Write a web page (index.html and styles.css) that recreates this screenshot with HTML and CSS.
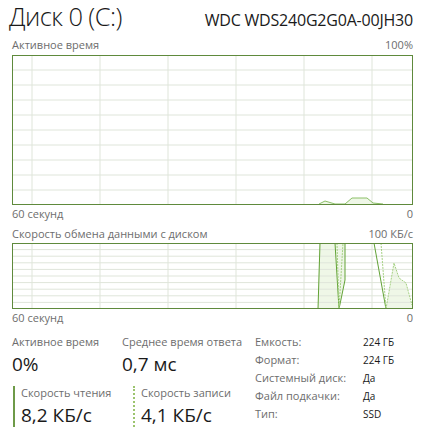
FILE: index.html
```html
<!DOCTYPE html>
<html lang="ru">
<head>
  <meta charset="UTF-8" />
  <title>Диск 0 (C:)</title>
  <link rel="stylesheet" href="styles.css">
</head>
<body>
  <header class="head">
    <h1>Диск 0 (C:)</h1>
    <div class="model">WDC WDS240G2G0A-00JH30</div>
  </header>

  <div class="graph-row top"><span>Активное время</span><span>100%</span></div>
  <svg class="chart big" viewBox="0 0 401 150" width="401" height="150">
    <polygon class="fill" points="307,149 313,146 323,149 333,149 340,143 355,143 361,148 371,149"/>
    <g class="grid">
      <line x1="0" y1="15" x2="401" y2="15"/>
      <line x1="0" y1="30" x2="401" y2="30"/>
      <line x1="0" y1="45" x2="401" y2="45"/>
      <line x1="0" y1="60" x2="401" y2="60"/>
      <line x1="0" y1="75" x2="401" y2="75"/>
      <line x1="0" y1="90" x2="401" y2="90"/>
      <line x1="0" y1="105" x2="401" y2="105"/>
      <line x1="0" y1="120" x2="401" y2="120"/>
      <line x1="0" y1="135" x2="401" y2="135"/>
      <line x1="20" y1="0" x2="20" y2="150"/>
      <line x1="88" y1="0" x2="88" y2="150"/>
      <line x1="156" y1="0" x2="156" y2="150"/>
      <line x1="224" y1="0" x2="224" y2="150"/>
      <line x1="292" y1="0" x2="292" y2="150"/>
      <line x1="360" y1="0" x2="360" y2="150"/>
    </g>
    <polyline class="line" points="307,149 313,146 323,149 333,149 340,143 355,143 361,148 371,149"/>
    <rect class="frame" x="0.5" y="0.5" width="400" height="149"/>
  </svg>
  <div class="graph-row"><span>60 секунд</span><span>0</span></div>

  <div class="graph-row second"><span>Скорость обмена данными с диском</span><span>100 КБ/с</span></div>
  <svg class="chart small" viewBox="0 0 401 66" width="401" height="66">
    <polygon class="fill" points="307,0 333,0 333,37 327,66 306,66"/>
    <polygon class="fill" points="374,66 382,20 387,35 394,40 400,62 400,66"/>
    <g class="grid">
      <line x1="0" y1="6.6" x2="401" y2="6.6"/>
      <line x1="0" y1="13.2" x2="401" y2="13.2"/>
      <line x1="0" y1="19.8" x2="401" y2="19.8"/>
      <line x1="0" y1="26.4" x2="401" y2="26.4"/>
      <line x1="0" y1="33" x2="401" y2="33"/>
      <line x1="0" y1="39.6" x2="401" y2="39.6"/>
      <line x1="0" y1="46.2" x2="401" y2="46.2"/>
      <line x1="0" y1="52.8" x2="401" y2="52.8"/>
      <line x1="0" y1="59.4" x2="401" y2="59.4"/>
      <line x1="20" y1="0" x2="20" y2="66"/>
      <line x1="88" y1="0" x2="88" y2="66"/>
      <line x1="156" y1="0" x2="156" y2="66"/>
      <line x1="224" y1="0" x2="224" y2="66"/>
      <line x1="292" y1="0" x2="292" y2="66"/>
      <line x1="360" y1="0" x2="360" y2="66"/>
    </g>
    <polyline class="line" points="308,0 306,66"/>
    <polyline class="line" points="323,0 327,66 333,37 333,0"/>
    <polyline class="line" points="362,0 374,66"/>
    <polyline class="dash" points="325,0 327,66 331,0"/>
    <polyline class="dash" points="369,0 374,66 382,20 387,35 394,40 400,62"/>
    <rect class="frame" x="0.5" y="0.5" width="400" height="65"/>
  </svg>
  <div class="graph-row"><span>60 секунд</span><span>0</span></div>

  <div class="stats">
    <div class="left">
      <div class="pair">
        <div class="stat">
          <div class="label">Активное время</div>
          <div class="value">0%</div>
        </div>
        <div class="stat">
          <div class="label">Среднее время ответа</div>
          <div class="value">0,7 мс</div>
        </div>
      </div>
      <div class="pair io">
        <div class="stat read">
          <div class="label">Скорость чтения</div>
          <div class="value">8,2 КБ/с</div>
        </div>
        <div class="stat write">
          <div class="label">Скорость записи</div>
          <div class="value">4,1 КБ/с</div>
        </div>
      </div>
    </div>
    <dl class="props">
      <dt>Емкость:</dt><dd>224 ГБ</dd>
      <dt>Формат:</dt><dd>224 ГБ</dd>
      <dt>Системный диск:</dt><dd>Да</dd>
      <dt>Файл подкачки:</dt><dd>Да</dd>
      <dt>Тип:</dt><dd>SSD</dd>
    </dl>
  </div>
</body>
</html>
```

FILE: styles.css
```css
body {
  margin: 0;
  padding: 0 8px 0 12px;
  background: #fff;
  font-family: "Open Sans", "Noto Sans", sans-serif;
  color: #1a1a1a;
  width: 401px;
}

.head {
  height: 38px;
  display: flex;
  justify-content: space-between;
  align-items: baseline;
  margin-left: -3px;
}

.head h1 {
  margin: 0;
  font-size: 25.5px;
  font-weight: 300;
  letter-spacing: -0.6px;
  line-height: 33px;
}

.model {
  font-size: 16px;
  font-weight: 400;
  letter-spacing: -0.2px;
}

.graph-row {
  display: flex;
  justify-content: space-between;
  font-size: 11px;
  line-height: 14px;
  color: #6d6d6d;
  margin-top: 2px;
}

.graph-row.top {
  margin-top: 0;
  margin-bottom: 3px;
}

.graph-row.second {
  margin-top: 6px;
  margin-bottom: 2px;
}

.chart {
  display: block;
}

.chart .grid line {
  stroke: #dfe5da;
  stroke-width: 1;
}

.chart .frame {
  fill: none;
  stroke: #5f8a3c;
  stroke-width: 1;
}

.chart .fill {
  fill: #eff7e7;
}

.chart .line {
  fill: none;
  stroke: #62a236;
  stroke-width: 1;
}

.chart.big .line {
  stroke: #8cc068;
}

.chart .dash {
  fill: none;
  stroke: #a6d184;
  stroke-width: 1;
  stroke-dasharray: 2 1;
}

.stats {
  display: flex;
  margin-top: 10px;
}

.left {
  width: 243px;
}

.pair {
  display: flex;
}

.stat:first-child {
  width: 110px;
}

.label {
  font-size: 11px;
  line-height: 14px;
  color: #6d6d6d;
  white-space: nowrap;
}

.value {
  font-size: 19px;
  line-height: 24px;
  margin-top: 3px;
  white-space: nowrap;
}

.io {
  margin-top: 10px;
}

.io .stat {
  padding-left: 6px;
  height: 41px;
}

.io .read {
  width: 112px;
  margin-left: 1px;
  border-left: 2px solid #6e9a48;
}

.io .write {
  border-left: 2px dotted #9cc46e;
}

.props {
  margin: 0;
  display: grid;
  grid-template-columns: 108px auto;
  grid-auto-rows: 18px;
  font-size: 11px;
  line-height: 14px;
}

.props dt {
  color: #6d6d6d;
}

.props dd {
  margin: 0;
  color: #1a1a1a;
  font-size: 10px;
}
```
